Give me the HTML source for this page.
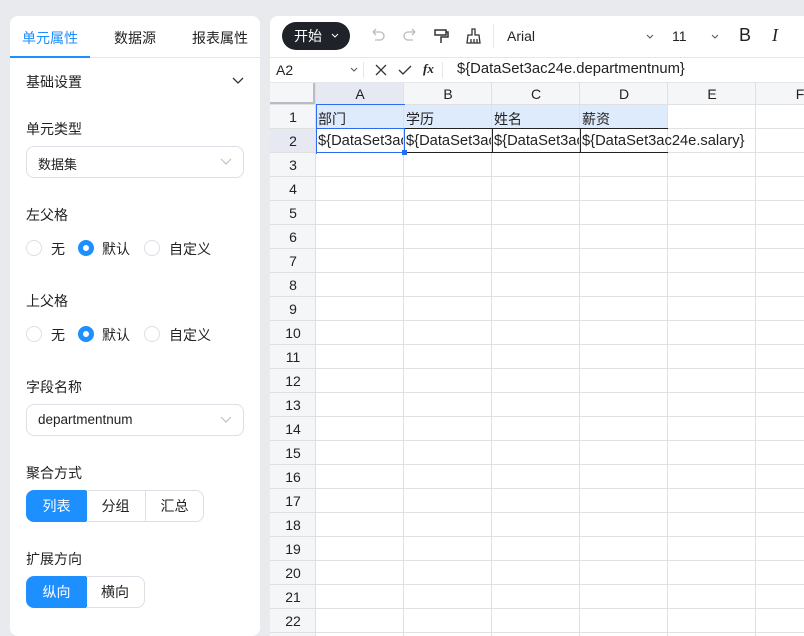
<!DOCTYPE html><html><head><meta charset="utf-8"><style>
*{box-sizing:border-box;margin:0;padding:0}
body{width:804px;height:630px;overflow:hidden;background:#e9eaee;font-family:"Liberation Sans","Noto Sans CJK SC",sans-serif;color:#222;position:relative}
.a{position:absolute}
#L{left:10px;top:16px;width:250px;height:620px;background:#fff;border-radius:8px}
#R{left:270px;top:16px;width:540px;height:620px;background:#fff;border-radius:8px 0 0 0;overflow:hidden}
.t{font-size:14px}
.sel{border:1px solid #dcdfe6;border-radius:8px;height:32px;width:218px;left:16px;font-size:13px;padding:7px 11px}
.rd{width:16px;height:16px;border:1px solid #dcdfe6;border-radius:50%}
.rd.on{border:5px solid #1e8fff}
.seg{height:32px;border:1px solid #dcdfe6;font-size:14px;text-align:center;line-height:30px}
.cell{font-size:14.7px;white-space:nowrap;overflow:hidden;line-height:24px;padding-left:2px}
</style></head><body>
<div id="L" class="a">
 <div class="a" style="left:12px;top:12px;font-size:14px;color:#1e8fff">单元属性</div>
 <div class="a" style="left:104px;top:12px;font-size:14px">数据源</div>
 <div class="a" style="left:182px;top:12px;font-size:14px">报表属性</div>
 <div class="a" style="left:0;top:41px;width:250px;height:1px;background:#e4e6eb"></div>
 <div class="a" style="left:0;top:40px;width:80px;height:2px;background:#1e8fff"></div>
 <div class="a t" style="left:16px;top:56px">基础设置</div>
 <svg class="a" style="left:222px;top:60px" width="12" height="10"><path d="M1 2l5 5 5-5" fill="none" stroke="#333" stroke-width="1.3"/></svg>
 <div class="a t" style="left:16px;top:103px">单元类型</div>
 <div class="a sel" style="top:130px">数据集</div>
 <svg class="a" style="left:210px;top:142px" width="12" height="8"><path d="M1 1l5 5 5-5" fill="none" stroke="#bbb" stroke-width="1"/></svg>
 <div class="a t" style="left:16px;top:189px">左父格</div>
 <div class="a rd" style="left:16px;top:224px"></div><div class="a t" style="left:41px;top:223px">无</div>
 <div class="a rd on" style="left:68px;top:224px"></div><div class="a t" style="left:92px;top:223px">默认</div>
 <div class="a rd" style="left:134px;top:224px"></div><div class="a t" style="left:159px;top:223px">自定义</div>
 <div class="a t" style="left:16px;top:275px">上父格</div>
 <div class="a rd" style="left:16px;top:310px"></div><div class="a t" style="left:41px;top:309px">无</div>
 <div class="a rd on" style="left:68px;top:310px"></div><div class="a t" style="left:92px;top:309px">默认</div>
 <div class="a rd" style="left:134px;top:310px"></div><div class="a t" style="left:159px;top:309px">自定义</div>
 <div class="a t" style="left:16px;top:361px">字段名称</div>
 <div class="a sel" style="top:388px;font-size:13.5px">departmentnum</div>
 <svg class="a" style="left:210px;top:400px" width="12" height="8"><path d="M1 1l5 5 5-5" fill="none" stroke="#bbb" stroke-width="1"/></svg>
 <div class="a t" style="left:16px;top:447px">聚合方式</div>
 <div class="a seg" style="left:16px;top:474px;width:61px;background:#1e8fff;border-color:#1e8fff;color:#fff;border-radius:8px 0 0 8px">列表</div>
 <div class="a seg" style="left:76px;top:474px;width:60px;border-left:none">分组</div>
 <div class="a seg" style="left:135px;top:474px;width:59px;border-radius:0 8px 8px 0">汇总</div>
 <div class="a t" style="left:16px;top:533px">扩展方向</div>
 <div class="a seg" style="left:16px;top:560px;width:61px;background:#1e8fff;border-color:#1e8fff;color:#fff;border-radius:8px 0 0 8px">纵向</div>
 <div class="a seg" style="left:76px;top:560px;width:59px;border-left:none;border-radius:0 8px 8px 0">横向</div>
</div>
<div id="R" class="a">
 <div class="a" style="left:12px;top:6px;width:68px;height:28px;background:#1f2329;border-radius:14px;color:#fff;font-size:14px;line-height:28px;padding-left:12px">开始</div>
 <svg class="a" style="left:61px;top:17px" width="8" height="6"><path d="M1 1l3 3 3-3" fill="none" stroke="#fff" stroke-width="1"/></svg>
 <svg class="a" style="left:98px;top:10px" width="20" height="20"><path d="M5 6h7a4 4 0 010 8H7M5 6l3-3M5 6l3 3" fill="none" stroke="#bbb" stroke-width="1.3"/></svg>
 <svg class="a" style="left:130px;top:10px" width="20" height="20"><path d="M15 6H8a4 4 0 000 8h5M15 6l-3-3M15 6l-3 3" fill="none" stroke="#bbb" stroke-width="1.3"/></svg>
 <svg class="a" style="left:162px;top:10px" width="20" height="20"><path d="M3 4h11v5H3zM14 6h2v5H9v6" fill="none" stroke="#333" stroke-width="1.5"/></svg>
 <svg class="a" style="left:194px;top:10px" width="20" height="20"><path d="M8 3h3v6h4l1 8H3l1-8h4zM7 17v-4M10 17v-4M13 17v-4" fill="none" stroke="#333" stroke-width="1.3"/></svg>
 <div class="a" style="left:223px;top:8px;width:1px;height:24px;background:#e4e6eb"></div>
 <div class="a" style="left:237px;top:12px;font-size:14px">Arial</div>
 <svg class="a" style="left:376px;top:18px" width="8" height="6"><path d="M1 1l3 3 3-3" fill="none" stroke="#555" stroke-width="1"/></svg>
 <div class="a" style="left:402px;top:12px;font-size:14px">11</div>
 <svg class="a" style="left:441px;top:18px" width="8" height="6"><path d="M1 1l3 3 3-3" fill="none" stroke="#555" stroke-width="1"/></svg>
 <div class="a" style="left:469px;top:9px;font-size:18px">B</div>
 <div class="a" style="left:502px;top:9px;font-size:18px;font-family:'Liberation Serif',serif;font-style:italic">I</div>
 <div class="a" style="left:0;top:41px;width:540px;height:1px;background:#e4e6eb"></div>
 <div class="a" style="left:6px;top:46px;font-size:14px">A2</div>
 <svg class="a" style="left:80px;top:51px" width="8" height="6"><path d="M1 1l3 3 3-3" fill="none" stroke="#555" stroke-width="1"/></svg>
 <div class="a" style="left:93px;top:46px;width:1px;height:16px;background:#e4e6eb"></div>
 <svg class="a" style="left:104px;top:47px" width="14" height="14"><path d="M2 2l10 10M12 2L2 12" stroke="#333" stroke-width="1.3"/></svg>
 <svg class="a" style="left:128px;top:47px" width="14" height="14"><path d="M1 7l4 4 8-8" fill="none" stroke="#333" stroke-width="1.3"/></svg>
 <div class="a" style="left:153px;top:45px;font-size:13px;font-style:italic;font-family:'Liberation Serif',serif;font-weight:bold">fx</div>
 <div class="a" style="left:172px;top:46px;width:1px;height:16px;background:#e4e6eb"></div>
 <div class="a" style="left:187px;top:45px;font-size:14.8px;line-height:17px">${DataSet3ac24e.departmentnum}</div>
 <div class="a" style="left:0;top:66px;width:540px;height:1px;background:#e4e6eb"></div>
 <div id="g"></div>
</div>
<script>
var g=document.getElementById('g'),h='';
var ox=46,cw=88,top0=67;
h+='<div class="a" style="left:0;top:'+top0+'px;width:540px;height:22px;background:#f5f6f8"></div>';
h+='<div class="a" style="left:0;top:'+(top0+22)+'px;width:46px;height:560px;background:#f5f6f8"></div>';
h+='<div class="a" style="left:0;top:'+(top0+46)+'px;width:46px;height:24px;background:#e6e9f2"></div>';
h+='<div class="a" style="left:46px;top:'+top0+'px;width:88px;height:22px;background:#e6e9f2"></div>';
h+='<div class="a" style="left:0;top:'+(top0+19)+'px;width:44px;height:3px;background:#b8bcc6"></div>';
h+='<div class="a" style="left:43px;top:'+top0+'px;width:3px;height:22px;background:#b8bcc6"></div>';
h+='<div class="a" style="left:46px;top:'+(top0+22)+'px;width:352px;height:24px;background:#deebfc"></div>';
var cols='ABCDEF';
for(var i=0;i<6;i++){h+='<div class="a" style="left:'+(ox+i*cw)+'px;top:'+top0+'px;width:'+cw+'px;text-align:center;font-size:14px;line-height:22px">'+cols[i]+'</div>';
h+='<div class="a" style="left:'+(ox+i*cw+cw-1)+'px;top:'+top0+'px;width:1px;height:560px;background:#e0e0e0"></div>';}
h+='<div class="a" style="left:45px;top:'+top0+'px;width:1px;height:560px;background:#e0e0e0"></div>';
for(var r=0;r<23;r++){var y=top0+22+r*24;
h+='<div class="a" style="left:0;top:'+(y-1)+'px;width:540px;height:1px;background:#e0e0e0"></div>';
if(r<22)h+='<div class="a" style="left:0;top:'+y+'px;width:46px;text-align:center;font-size:14px;line-height:24px">'+(r+1)+'</div>';}
var y1=top0+22,y2=top0+46;
var hd=['部门','学历','姓名','薪资'];
for(var i=0;i<4;i++){
h+='<div class="a cell" style="left:'+(ox+i*cw)+'px;top:'+(y1+2)+'px;width:88px;font-size:14px">'+hd[i]+'</div>';
h+='<div class="a" style="left:'+(ox+i*cw)+'px;top:'+(y2-1)+'px;width:88px;height:25px;border-bottom:1px solid #222;border-top:1px solid #222;border-left:1px solid #222"></div>';}
var v=['${DataSet3ac24e.departmentnum}','${DataSet3ac24e.edu}','${DataSet3ac24e.name}'];
for(var i=0;i<3;i++)h+='<div class="a cell" style="left:'+(ox+i*cw)+'px;top:'+y2+'px;width:87px">'+v[i]+'</div>';
h+='<div class="a cell" style="left:'+(ox+3*cw)+'px;top:'+y2+'px;width:200px;overflow:visible">${DataSet3ac24e.salary}</div>';
h+='<div class="a" style="left:46px;top:'+(y1-1)+'px;width:89px;height:50px;border:1px solid #2b6bf0;border-bottom:none;border-right:none"></div>';
h+='<div class="a" style="left:46px;top:'+(y2-1)+'px;width:89px;height:25px;border:1px solid #2b6bf0"></div>';
h+='<div class="a" style="left:132px;top:'+(y2+21)+'px;width:5px;height:5px;background:#2b6bf0"></div>';
g.innerHTML=h;
</script>
</body></html>
